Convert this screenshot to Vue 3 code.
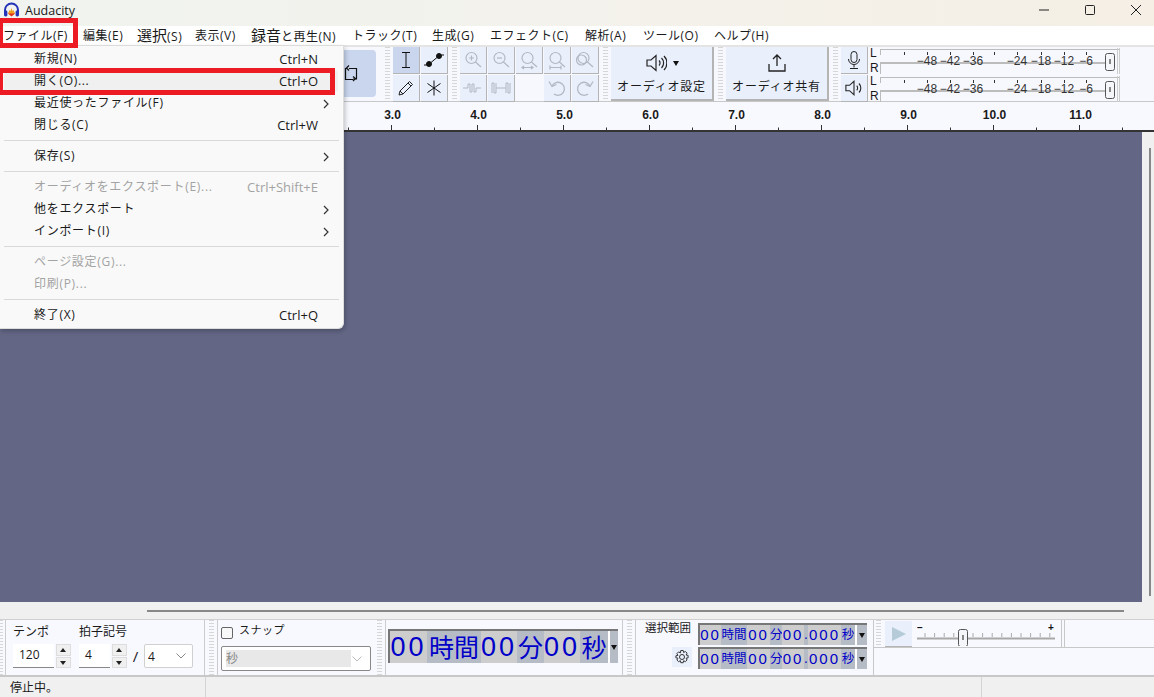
<script setup>
const menus = [
  { label: 'ファイル', key: '(F)', width: 80 },
  { label: '編集', key: '(E)', width: 54 },
  { label: '選択', key: '(S)', width: 58, big: true },
  { label: '表示', key: '(V)', width: 56 },
  { label: '録音', rest: 'と再生', key: '(N)', width: 101, big: true },
  { label: 'トラック', key: '(T)', width: 80 },
  { label: '生成', key: '(G)', width: 58 },
  { label: 'エフェクト', key: '(C)', width: 95 },
  { label: '解析', key: '(A)', width: 58 },
  { label: 'ツール', key: '(O)', width: 71 },
  { label: 'ヘルプ', key: '(H)', width: 70 }
]

const fileMenu = [
  { label: '新規(N)', short: 'Ctrl+N' },
  { label: '開く(O)...', short: 'Ctrl+O', hover: true },
  { label: '最近使ったファイル(F)', sub: true },
  { label: '閉じる(C)', short: 'Ctrl+W' },
  { sep: true },
  { label: '保存(S)', sub: true },
  { sep: true },
  { label: 'オーディオをエクスポート(E)...', short: 'Ctrl+Shift+E', off: true },
  { label: '他をエクスポート', sub: true },
  { label: 'インポート(I)', sub: true },
  { sep: true },
  { label: 'ページ設定(G)...', off: true },
  { label: '印刷(P)...', off: true },
  { sep: true },
  { label: '終了(X)', short: 'Ctrl+Q' }
]

// ruler numbers every 86px
const rulerLabels = ['3.0', '4.0', '5.0', '6.0', '7.0', '8.0', '9.0', '10.0', '11.0']
const rulerX = (i) => 391.5 + i * 86
const minorTicks = Array.from({ length: 10 }, (_, i) => 348.5 + i * 86)

const meterMarks = [
  { x: 927, t: '−48' }, { x: 950, t: '−42' }, { x: 973, t: '−36' },
  { x: 1017, t: '−24' }, { x: 1041, t: '−18' }, { x: 1064, t: '−12' }, { x: 1086, t: '−6' }
]
const meterBlank = [904, 994]

const bigTime = [
  { t: '00', w: 37, d: true }, { t: '時間', w: 54 }, { t: '00', w: 36, d: true },
  { t: '分', w: 27 }, { t: '00', w: 36, d: true }, { t: '秒', w: 28 }
]
const smallTime = [
  { t: '00', w: 21, d: true }, { t: '時間', w: 26 }, { t: '00', w: 23, d: true },
  { t: '分', w: 12 }, { t: '00', w: 22, d: true }, { t: '.', w: 4 },
  { t: '000', w: 33, d: true }, { t: '秒', w: 14 }
]
const sliderTicks = Array.from({ length: 14 }, (_, i) => 8 + i * 9.6)
</script>

<template>
  <div class="window">
    <!-- title bar -->
    <header class="titlebar">
      <svg class="app-icon" width="17" height="16" viewBox="0 0 17 16">
        <path d="M2 10V8a6.5 6.5 0 0 1 13 0v2" fill="none" stroke="#2433b8" stroke-width="2" />
        <rect x="1" y="8.5" width="3.4" height="6" rx="1.4" fill="#2433b8" />
        <rect x="12.6" y="8.5" width="3.4" height="6" rx="1.4" fill="#2433b8" />
        <path d="M5 11.5 6.5 8l1 1 1-3 1 3 1-1 1.500 3.500-3.500 2.500z" fill="#f0a020" />
        <path d="M5 11.500h7L8.500 14.500z" fill="#e03020" />
      </svg>
      <span class="app-name">Audacity</span>
      <div class="win-btns">
        <svg width="12" height="12" viewBox="0 0 12 12"><path d="M1 6h10" stroke="#222" /></svg>
        <svg width="12" height="12" viewBox="0 0 12 12"><rect x="1.500" y="1.500" width="9" height="9" rx="1" fill="none" stroke="#222" /></svg>
        <svg width="12" height="12" viewBox="0 0 12 12"><path d="M1 1l10 10M11 1 1 11" stroke="#222" /></svg>
      </div>
    </header>

    <!-- menu bar -->
    <nav class="menubar">
      <span v-for="m in menus" :key="m.key" class="menu-item" :style="{ width: m.width + 'px' }">
        <span :class="{ big: m.big }">{{ m.label }}</span>{{ m.rest }}{{ m.key }}
      </span>
    </nav>

    <!-- top toolbars -->
    <section class="toolbars">
      <div class="tb transport">
        <div class="loop-btn">
          <svg width="18" height="18" viewBox="0 0 18 18" fill="none" stroke="#111" stroke-width="1.200">
            <path d="M7 3.500h7.500v10.500H11M11 14.500H3.500V3.500H5" />
            <path d="M7 1l-2.500 2.500L7 6M11 12l2.500 2-2.500 2.500" transform="translate(0 -.5)" />
          </svg>
        </div>
      </div>
      <i class="grip"></i>
      <div class="tb tools">
        <button class="btn on">
          <svg width="18" height="20" viewBox="0 0 18 20" fill="none" stroke="#111"><path d="M5 2.500h8M5 17.500h8M9 2.500v15" /></svg>
        </button>
        <button class="btn">
          <svg width="22" height="16" viewBox="0 0 22 16" fill="none" stroke="#111"><path d="M1 13h4l12-10h4" /><circle cx="6" cy="12" r="2.500" fill="#111" /><circle cx="16" cy="4" r="2.500" fill="#111" /></svg>
        </button>
        <button class="btn">
          <svg width="18" height="18" viewBox="0 0 18 18" fill="none" stroke="#222"><path d="M2 16l1-4L12.500 2.500l3 3L6 15z" /><path d="M11 4l3 3M3 12l3 3" /></svg>
        </button>
        <button class="btn">
          <svg width="18" height="18" viewBox="0 0 18 18" fill="none" stroke="#111"><path d="M9 1.500v15M2.500 4.500l13 9M15.500 4.500l-13 9" /></svg>
        </button>
      </div>
      <i class="grip"></i>
      <div class="tb edit">
        <button v-for="n in 5" :key="'z' + n" class="btn dim">
          <svg width="20" height="20" viewBox="0 0 20 20" fill="none" stroke="#b3b8c2" stroke-width="1.200">
            <circle cx="8.500" cy="8" r="5.500" />
            <path d="M12.500 12l5.500 5" />
            <path v-if="n === 1" d="M6 8h5M8.500 5.500v5" />
            <path v-if="n === 2" d="M6 8h5" />
            <path v-if="n === 3" d="M3 17.500h11M5 16l-2 1.500 2 1.500M12 16l2 1.500-2 1.500" />
            <path v-if="n === 4" d="M3 17.500h11M3 15.500v4M14 15.500v4" />
            <circle v-if="n === 5" cx="6.500" cy="10" r="5" />
          </svg>
        </button>
        <button class="btn dim">
          <svg width="22" height="14" viewBox="0 0 22 14" fill="none" stroke="#b3b8c2"><path d="M1 7h5V3h2v8h2V3h2v8h2V7h5" /></svg>
        </button>
        <button class="btn dim">
          <svg width="22" height="14" viewBox="0 0 22 14" fill="none" stroke="#b3b8c2"><path d="M2 12V2h2v10h2V2M16 12V2h2v10h2V2M6 7h10" /></svg>
        </button>
        <span class="blank-btn"></span>
        <button class="btn dim">
          <svg width="20" height="20" viewBox="0 0 20 20" fill="none" stroke="#b3b8c2" stroke-width="1.300"><path d="M5 8a6.500 6.500 0 1 1 2 8" /><path d="M2 3.500 5 8.500l4.500-2" /></svg>
        </button>
        <button class="btn dim">
          <svg width="20" height="20" viewBox="0 0 20 20" fill="none" stroke="#b3b8c2" stroke-width="1.300"><path d="M15 8a6.500 6.500 0 1 0-2 8" /><path d="M18 3.500 15 8.500l-4.500-2" /></svg>
        </button>
      </div>
      <i class="grip"></i>
      <div class="tb">
        <button class="btn wide">
          <span class="wide-icon">
            <svg width="22" height="20" viewBox="0 0 22 20" fill="none" stroke="#222" stroke-width="1.200"><path d="M2 7h4l5-4.500v15L6 13H2z" /><path d="M14 7.500a3.500 3.500 0 0 1 0 5M16.500 5a7 7 0 0 1 0 10M19 3a10 10 0 0 1 0 14" /></svg>
            <em class="caret"></em>
          </span>
          <span class="wide-text">オーディオ設定</span>
        </button>
      </div>
      <i class="grip"></i>
      <div class="tb">
        <button class="btn wide">
          <span class="wide-icon">
            <svg width="20" height="20" viewBox="0 0 20 20" fill="none" stroke="#222" stroke-width="1.300"><path d="M10 13V2M6 6l4-4 4 4M2 11v7h16v-7" /></svg>
          </span>
          <span class="wide-text">オーディオ共有</span>
        </button>
      </div>
      <i class="grip"></i>
      <div class="tb meters">
        <div v-for="row in ['mic', 'spk']" :key="row" class="meter-row">
          <button class="btn meter-btn">
            <svg v-if="row === 'mic'" width="16" height="20" viewBox="0 0 16 20" fill="none" stroke="#222"><rect x="5" y="1.500" width="6" height="11" rx="3" /><path d="M2.500 9a5.500 5.500 0 0 0 11 0M8 15v2.500M4 18.500h8" /></svg>
            <svg v-else width="20" height="18" viewBox="0 0 22 20" fill="none" stroke="#222" stroke-width="1.200"><path d="M2 7h4l5-4.500v15L6 13H2z" /><path d="M14 7.500a3.500 3.500 0 0 1 0 5M16.500 5a7 7 0 0 1 0 10" /></svg>
          </button>
          <div class="lr"><span>L</span><span>R</span></div>
          <svg class="meter" width="240" height="26" viewBox="880 0 240 26">
            <path d="M880 1.500H1120M880 14.500H1105M880 15.500H1105M880.500 2V7M880.500 15V26" stroke="#bcbcbc" fill="none" />
            <path v-for="x in meterBlank" :key="x" :d="`M${x}.5 4v3`" stroke="#333" />
            <template v-for="m in meterMarks" :key="m.t">
              <path :d="`M${m.x}.5 4v3`" stroke="#333" />
              <text :x="m.x" y="17" text-anchor="middle" class="meter-text">{{ m.t }}</text>
            </template>
            <rect x="1105.500" y="5.500" width="9" height="17" rx="2" fill="#f5f6fa" stroke="#555" />
            <path d="M1110 11v5" stroke="#888" stroke-width="2" />
            <path d="M1117.500 0v26M1119.500 0v26" stroke="#ccc" />
          </svg>
        </div>
      </div>
    </section>

    <!-- ruler -->
    <svg class="ruler" width="1154" height="30" viewBox="0 0 1154 30">
      <path d="M0 29h1154" stroke="#333" stroke-width="2" />
      <path v-for="x in minorTicks" :key="x" :d="`M${x} 25.500V28`" stroke="#333" />
      <template v-for="(l, i) in rulerLabels" :key="l">
        <path :d="`M${rulerX(i)} 23v5`" stroke="#333" />
        <text :x="rulerX(i) + 1" y="17" text-anchor="middle" class="ruler-text">{{ l }}</text>
      </template>
    </svg>

    <!-- track area -->
    <main class="tracks">
      <div class="canvas"></div>
      <div class="vscroll"><span></span></div>
    </main>
    <div class="hscroll"><span></span></div>

    <!-- bottom toolbars -->
    <section class="bottom">
      <i class="grip small-grip"></i>
      <div class="bt tempo">
        <div class="tempo-col">
          <label>テンポ</label>
          <div class="field-row">
            <span class="field f120">120</span>
            <span class="spin"><b class="up"></b><b class="down"></b></span>
          </div>
        </div>
        <div class="tempo-col">
          <label>拍子記号</label>
          <div class="field-row">
            <span class="field f4">4</span>
            <span class="spin"><b class="up"></b><b class="down"></b></span>
            <span class="slash">/</span>
            <span class="combo">4
              <svg width="10" height="6" viewBox="0 0 10 6" fill="none" stroke="#888"><path d="M.5.500 5 5l4.500-4.500" /></svg>
            </span>
          </div>
        </div>
      </div>
      <i class="grip"></i>
      <div class="bt snap">
        <div class="snap-top"><span class="check"></span><span class="snap-label">スナップ</span></div>
        <div class="snap-select">
          <span>秒</span>
          <svg width="10" height="6" viewBox="0 0 10 6" fill="none" stroke="#bbb"><path d="M.5.500 5 5l4.500-4.500" /></svg>
        </div>
      </div>
      <i class="grip"></i>
      <div class="bt time">
        <div class="big-clock">
          <span v-for="(c, i) in bigTime" :key="i" class="cell" :class="{ digit: c.d }" :style="{ width: c.w + 'px' }">{{ c.t }}</span>
          <span class="clock-drop"><em class="caret"></em></span>
        </div>
      </div>
      <i class="grip"></i>
      <div class="bt selection">
        <div class="sel-left">
          <span>選択範囲</span>
          <button class="gear">
            <svg width="16" height="16" viewBox="0 0 16 16" fill="none" stroke="#333"><circle cx="8" cy="8" r="2.500" /><path d="M6.800 1.500h2.400l.4 2 1.800-1 1.700 1.700-1 1.800 2 .4v2.400l-2 .4 1 1.800-1.700 1.700-1.800-1-.4 2H6.800l-.4-2-1.800 1-1.700-1.700 1-1.800-2-.4V6.800l2-.4-1-1.800 1.700-1.700 1.800 1z" /></svg>
          </button>
        </div>
        <div class="sel-clocks">
          <div v-for="n in 2" :key="n" class="small-clock">
            <span v-for="(c, i) in smallTime" :key="i" class="cell" :class="{ digit: c.d }" :style="{ width: c.w + 'px' }">{{ c.t }}</span>
            <span class="clock-drop"><em class="caret"></em></span>
          </div>
        </div>
      </div>
      <div class="bt play-side">
        <div class="play-row">
          <i class="grip"></i>
          <button class="play-btn">
            <svg width="16" height="16" viewBox="0 0 16 16"><path d="M1 1l14 7-14 7z" fill="#b5ccd8" /></svg>
          </button>
          <svg class="speed" width="140" height="24" viewBox="0 0 140 24">
            <text x="0" y="9" class="speed-text">−</text>
            <text x="131" y="9" class="speed-text">+</text>
            <path v-for="x in sliderTicks" :key="x" :d="`M${x} 11v4`" stroke="#aaa" />
            <path d="M0 16.500h138" stroke="#a8a8a8" stroke-width="2" />
            <rect x="41.500" y="7.500" width="9" height="17" rx="2" fill="#f5f6fa" stroke="#555" />
            <path d="M46 13v5" stroke="#888" stroke-width="2" />
          </svg>
          <i class="dbl"></i>
        </div>
        <div class="play-empty"></div>
      </div>
    </section>

    <!-- status bar -->
    <footer class="status">
      <span class="st-1">停止中。</span>
      <span class="st-2"></span>
      <span class="st-3"></span>
    </footer>

    <!-- open file menu -->
    <div class="popup">
      <template v-for="(it, i) in fileMenu" :key="i">
        <div v-if="it.sep" class="sep"></div>
        <div v-else class="row" :class="{ off: it.off, hover: it.hover }">
          <span class="row-label">{{ it.label }}</span>
          <span class="short">{{ it.short }}</span>
          <svg v-if="it.sub" class="arrow" width="6" height="10" viewBox="0 0 6 10" fill="none" stroke="#333" stroke-width="1.200"><path d="M1 1l4 4-4 4" /></svg>
        </div>
      </template>
    </div>

    <!-- red callouts -->
    <div class="mark mark-menu"></div>
    <div class="mark mark-open"></div>
  </div>
</template>

<style>
html, body {
  margin: 0;
  background: #f0f0f0;
}
</style>

<style scoped>
.window {
  width: 1154px;
  height: 697px;
  position: relative;
  overflow: hidden;
  display: flex;
  flex-direction: column;
  font-family: "Open Sans", "Noto Sans CJK JP", sans-serif;
  font-size: 12px;
  color: #1a1a1a;
  background: #f0f0f0;
}

button {
  padding: 0;
  font: inherit;
  color: inherit;
}

/* title bar */
.titlebar {
  height: 26px;
  flex: none;
  display: flex;
  align-items: center;
  padding: 0 0 6px 3px;
  box-sizing: border-box;
  background: linear-gradient(90deg, #f0f3ef 0%, #f3f2ec 45%, #f5efe5 100%);
}

.app-name {
  margin-left: 5px;
  font-size: 12.500px;
}

.win-btns {
  margin-left: auto;
  display: flex;
  gap: 34px;
  padding-right: 12px;
}

/* menu */
.menubar {
  height: 19px;
  flex: none;
  display: flex;
  align-items: center;
  padding-left: 3px;
  background: #fff;
  white-space: nowrap;
  font-size: 12px;
}

.menu-item {
  display: block;
  flex: none;
  line-height: 19px;
  letter-spacing: .5px;
}

.big {
  font-size: 15px;
  letter-spacing: 0;
}

/* toolbars */
.toolbars {
  height: 57px;
  flex: none;
  display: flex;
  align-items: stretch;
  background: #f7f8fe;
  border-top: 2px solid #e4e4e4;
  border-bottom: 1px solid #c8c8c8;
  box-sizing: border-box;
}

.grip {
  display: block;
  flex: none;
  width: 7px;
  box-sizing: border-box;
  margin: 0 2px 0 3px;
  background: repeating-linear-gradient(180deg, #d6d6d6 0 1px, transparent 1px 3px) center / 5px 100% no-repeat;
}

.tb {
  display: flex;
  flex: none;
}

.transport {
  width: 381px;
  justify-content: flex-end;
  padding: 3px 5px 4px 0;
  box-sizing: border-box;
}

.loop-btn {
  width: 50px;
  border-radius: 4px;
  background: #c9d6ee;
  display: flex;
  align-items: center;
  justify-content: center;
}

.tools,
.edit {
  display: grid;
  grid-template-columns: repeat(2, 27px);
  grid-auto-rows: 27px;
  column-gap: 1px;
  row-gap: 1px;
  align-content: start;
}

.edit {
  grid-template-columns: repeat(5, 27px);
}

.btn {
  display: flex;
  align-items: center;
  justify-content: center;
  background: #e9f0fc;
  border: 0;
  border-right: 1px solid #b4b4b4;
  border-bottom: 1px solid #b4b4b4;
  box-sizing: border-box;
}

.btn.on {
  background: #c9d6ee;
}

.blank-btn {
  display: block;
}

.wide {
  width: 103px;
  flex-direction: column;
  gap: 4px;
  height: 54px;
  border-width: 0 2px 2px 0;
}

.wide-icon {
  display: flex;
  align-items: center;
  gap: 6px;
  height: 24px;
}

.wide-text {
  letter-spacing: .8px;
  font-size: 12px;
  line-height: 16px;
}

.caret {
  display: block;
  width: 0;
  height: 0;
  border: 3.500px solid transparent;
  border-top: 5px solid #111;
  border-bottom: 0;
}

.meters {
  flex: 1;
  flex-direction: column;
  gap: 1px;
}

.meter-row {
  height: 27px;
  display: flex;
  align-items: center;
}

.meter-btn {
  width: 27px;
  height: 27px;
}

.lr {
  width: 12px;
  padding-left: 2px;
  box-sizing: border-box;
  display: flex;
  flex-direction: column;
  font-family: "Liberation Sans", sans-serif;
  font-size: 12px;
  line-height: 15px;
}

.meter-text {
  font-family: "Liberation Sans", sans-serif;
  font-size: 12px;
  fill: #333;
}

/* ruler */
.ruler {
  display: block;
  flex: none;
  background: #f8f9ff;
}

.ruler-text {
  font-family: "Liberation Sans", sans-serif;
  font-weight: 700;
  font-size: 12px;
  fill: #1a1a1a;
}

/* tracks */
.tracks {
  flex: 1;
  display: flex;
  min-height: 0;
}

.canvas {
  flex: 1;
  background: #636785;
}

.vscroll {
  width: 12px;
  flex: none;
  padding: 16px 0 6px;
  box-sizing: border-box;
  display: flex;
  justify-content: flex-end;
}

.vscroll span {
  width: 2px;
  margin-right: 3px;
  background: #888;
}

.hscroll {
  height: 17px;
  flex: none;
  padding: 8px 30px 0 147px;
  box-sizing: border-box;
}

.hscroll span {
  display: block;
  height: 2px;
  background: #888;
}

/* bottom toolbars */
.bottom {
  height: 58px;
  flex: none;
  display: flex;
  align-items: stretch;
  background: #f8f9ff;
  border-top: 1px solid #d0d0d0;
  border-bottom: 2px solid #c8c8c8;
  box-sizing: border-box;
}

.small-grip {
  width: 3px;
  margin: 0 2px 0 0;
}

.bt {
  flex: none;
  box-sizing: border-box;
}

.tempo {
  width: 200px;
  display: flex;
  gap: 8px;
  padding: 3px 0 0 7px;
  border-left: 1px solid #ccc;
  border-right: 1px solid #ccc;
}

.tempo-col label {
  display: block;
  height: 21px;
  line-height: 17px;
}

.field-row {
  display: flex;
  align-items: center;
  height: 24px;
}

.field {
  display: block;
  height: 24px;
  line-height: 22px;
  background: #fff;
  border-bottom: 1px solid #888;
  box-sizing: border-box;
  font-size: 12px;
}

.f120 {
  width: 41px;
  padding-left: 6px;
}

.f4 {
  width: 31px;
  padding-left: 6px;
}

.spin {
  display: flex;
  flex-direction: column;
  gap: 1px;
  margin-left: 2px;
  width: 15px;
  height: 24px;
}

.spin b {
  flex: 1;
  background: #f0f0f0;
  position: relative;
  border: 1px solid #ddd;
}

.spin b::after {
  content: "";
  position: absolute;
  left: 3px;
  top: 3px;
  border: 3.500px solid transparent;
}

.up::after {
  border-bottom: 4px solid #222 !important;
  border-top: 0 !important;
}

.down::after {
  border-top: 4px solid #222 !important;
  border-bottom: 0 !important;
}

.slash {
  width: 17px;
  text-align: center;
  font-size: 15px;
}

.combo {
  width: 49px;
  height: 24px;
  display: flex;
  align-items: center;
  justify-content: space-between;
  padding: 0 6px 0 3px;
  box-sizing: border-box;
  background: #fff;
  border: 1px solid #d0d0d0;
  border-radius: 2px;
}

.snap {
  width: 156px;
  padding: 5px 2px 0 3px;
  border-left: 1px solid #ccc;
}

.snap-top {
  display: flex;
  align-items: center;
  gap: 6px;
  height: 15px;
  font-size: 11px;
  letter-spacing: .5px;
}

.snap-label {
  margin-top: -7px;
}

.check {
  display: block;
  width: 12px;
  height: 12px;
  box-sizing: border-box;
  border: 1px solid #666;
  border-radius: 2px;
  background: #f8f8f8;
}

.snap-select {
  margin-top: 6px;
  height: 25px;
  display: flex;
  align-items: center;
  justify-content: space-between;
  padding: 0 8px 0 4px;
  background: #fff;
  border: 1px solid #888;
  border-radius: 2px;
  box-sizing: border-box;
}

.snap-select span {
  width: 125px;
  height: 17px;
  line-height: 17px;
  background: #e8e8e8;
  color: #888;
}

.time {
  width: 238px;
  padding: 9px 0 0 2px;
  border-left: 1px solid #ccc;
  border-right: 1px solid #ccc;
}

.big-clock,
.small-clock {
  display: flex;
  align-items: stretch;
  box-sizing: border-box;
  background: #b6bcc6;
  color: #0000c8;
  border-top: 2px solid #777;
  border-left: 2px solid #777;
}

.big-clock {
  height: 34px;
  width: 230px;
  font-size: 25px;
  line-height: 32px;
}

.small-clock {
  height: 22px;
  width: 169px;
  font-size: 12.500px;
  line-height: 20px;
}

.cell {
  display: block;
  flex: none;
  text-align: center;
  white-space: nowrap;
  overflow: hidden;
}

.cell.digit {
  background: #cdcdcd;
  font-family: "Liberation Sans", sans-serif;
  font-weight: 400;
}

.big-clock .digit {
  font-size: 27px;
  letter-spacing: 3px;
}

.small-clock .digit {
  font-size: 15px;
  letter-spacing: 2px;
}

.clock-drop {
  flex: 1;
  display: flex;
  align-items: center;
  justify-content: center;
  border-left: 2px solid #fff;
}

.selection {
  width: 238px;
  display: flex;
  padding: 2px 0 0 9px;
  border-left: 1px solid #ccc;
}

.sel-left {
  width: 53px;
  display: flex;
  flex-direction: column;
  align-items: flex-start;
}

.sel-left > span {
  height: 21px;
  line-height: 12px;
  font-size: 11.500px;
}

.gear {
  margin: 4px 0 0 27px;
  width: 20px;
  height: 20px;
  display: flex;
  align-items: center;
  justify-content: center;
  background: #e9f0fc;
  border: 0;
}

.sel-clocks {
  display: flex;
  flex-direction: column;
  gap: 2px;
  padding-top: 1px;
}

.play-side {
  flex: 1;
  display: flex;
  flex-direction: column;
  border-left: 1px solid #c8c8c8;
}

.play-row {
  height: 27px;
  display: flex;
  align-items: stretch;
  border-bottom: 1px solid #c8c8c8;
}

.play-row .grip {
  margin: 0 3px 0 1px;
}

.play-btn {
  width: 27px;
  margin-top: 1px;
  display: flex;
  align-items: center;
  justify-content: center;
  background: #e9f0fc;
  border: 0;
  border-bottom: 1px solid #b4b4b4;
}

.speed {
  margin: 2px 0 0 5px;
}

.speed-text {
  font-family: "Liberation Sans", sans-serif;
  font-weight: 700;
  font-size: 10px;
  fill: #111;
}

.dbl {
  display: block;
  width: 2px;
  margin-left: 4px;
  border-left: 1px solid #c8c8c8;
  border-right: 1px solid #c8c8c8;
}

.play-empty {
  flex: 1;
}

/* status bar */
.status {
  height: 20px;
  flex: none;
  display: flex;
  background: #f0f0f0;
}

.st-1 {
  width: 206px;
  padding-left: 10px;
  box-sizing: border-box;
  line-height: 22px;
  border-right: 1px solid #d4d4d4;
}

.st-2 {
  width: 775px;
  border-right: 1px solid #d4d4d4;
}

/* popup menu */
.popup {
  position: absolute;
  left: 0;
  top: 46px;
  width: 344px;
  height: 283px;
  box-sizing: border-box;
  padding-top: 2px;
  background: #f9f9f9;
  border-right: 1px solid #ddd;
  border-bottom: 1px solid #ddd;
  border-radius: 0 0 6px 0;
  box-shadow: 1px 2px 5px rgba(0, 0, 0, .25);
}

.row {
  height: 22px;
  margin: 0 5px 0 4px;
  padding: 0 20px 0 30px;
  display: flex;
  align-items: center;
  justify-content: space-between;
  position: relative;
  line-height: 22px;
  white-space: nowrap;
  border-radius: 3px;
}

.row.hover {
  background: #f0f0f0;
}

.row.off {
  color: #a3a3a3;
}

.row-label {
  letter-spacing: .7px;
}

.short {
  font-family: "Open Sans", sans-serif;
  font-size: 13px;
}

.arrow {
  position: absolute;
  right: 9px;
  top: 7px;
}

.sep {
  height: 1px;
  margin: 4px 4px;
  background: #d9d9d9;
}

/* red callouts */
.mark {
  position: absolute;
  left: 0;
  border: 5px solid #ed1c24;
  border-left-width: 3px;
  box-sizing: border-box;
  pointer-events: none;
}

.mark-menu {
  top: 18px;
  width: 78px;
  height: 30px;
}

.mark-open {
  top: 68px;
  width: 335px;
  height: 27px;
}
</style>
